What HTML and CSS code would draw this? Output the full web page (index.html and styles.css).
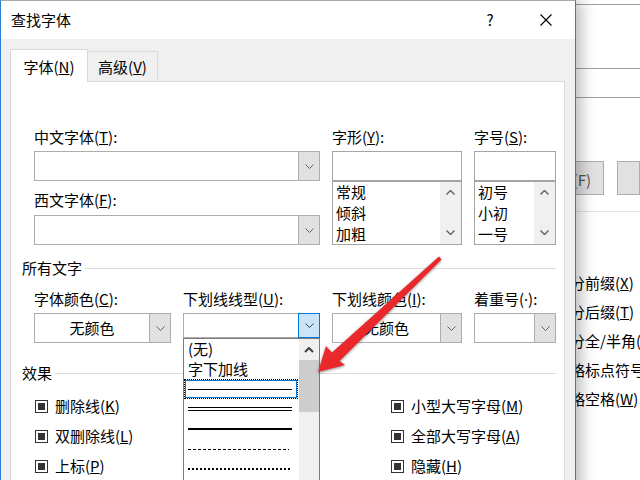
FILE: index.html
```html
<!DOCTYPE html>
<html lang="zh-CN">
<head>
    <meta charset="UTF-8">
    <meta name="viewport" content="width=device-width, initial-scale=1.0">
    <title>查找字体</title>
    <link rel="stylesheet" href="styles.css">
</head>
<body>
<div class="desk">

    <!-- word find dialog behind -->
    <div class="app">
        <div class="rule ru1"></div>
        <div class="rule ru2"></div>
        <div class="rule ru3"></div>
        <div class="appBtns">
            <div class="appBtn b1">查找下一处(F)</div>
            <div class="appBtn b2"></div>
        </div>
        <div class="rule ru4"></div>
        <div class="appOpts">
            <div>区分前缀(<u>X</u>)</div>
            <div>区分后缀(<u>T</u>)</div>
            <div>区分全/半角(<u>M</u>)</div>
            <div>忽略标点符号(<u>S</u>)</div>
            <div>忽略空格(<u>W</u>)</div>
        </div>
    </div>

    <div class="dialog">
        <div class="titlebar">
            <span class="title">查找字体</span>
            <span class="help">?</span>
            <span class="close">
                <svg width="12" height="12" viewBox="0 0 12 12"><path d="M.5.5 11.5 11.5M11.5.5.5 11.5" stroke="#000" stroke-width="1.1" fill="none"/></svg>
            </span>
        </div>

        <div class="body">
            <div class="tabs">
                <div class="tab on">字体(<u>N</u>)</div>
                <div class="tab off">高级(<u>V</u>)</div>
            </div>

            <div class="panel">
                <div class="fonts">
                    <div>
                        <div class="lbl first">中文字体(<u>T</u>):</div>
                        <div class="combo">
                            <span class="val"></span>
                            <span class="drop"><svg width="9" height="5" viewBox="0 0 9 5"><path d="M.5.5 4.5 4.5 8.5.5" fill="none" stroke="#606060"/></svg></span>
                        </div>
                        <div class="lbl second">西文字体(<u>F</u>):</div>
                        <div class="combo">
                            <span class="val"></span>
                            <span class="drop"><svg width="9" height="5" viewBox="0 0 9 5"><path d="M.5.5 4.5 4.5 8.5.5" fill="none" stroke="#606060"/></svg></span>
                        </div>
                    </div>
                    <div>
                        <div class="lbl first">字形(<u>Y</u>):</div>
                        <div class="tbox"></div>
                        <div class="lbox">
                            <div class="items">
                                <div>常规</div>
                                <div>倾斜</div>
                                <div>加粗</div>
                            </div>
                            <div class="sb">
                                <svg width="9" height="5" viewBox="0 0 9 5"><path d="M.5 4.5 4.5.5 8.5 4.5" fill="none" stroke="#606060" stroke-width="1.4"/></svg>
                                <svg width="9" height="5" viewBox="0 0 9 5"><path d="M.5.5 4.5 4.5 8.5.5" fill="none" stroke="#606060" stroke-width="1.4"/></svg>
                            </div>
                        </div>
                    </div>
                    <div>
                        <div class="lbl first">字号(<u>S</u>):</div>
                        <div class="tbox"></div>
                        <div class="lbox">
                            <div class="items">
                                <div>初号</div>
                                <div>小初</div>
                                <div>一号</div>
                            </div>
                            <div class="sb">
                                <svg width="9" height="5" viewBox="0 0 9 5"><path d="M.5 4.5 4.5.5 8.5 4.5" fill="none" stroke="#606060" stroke-width="1.4"/></svg>
                                <svg width="9" height="5" viewBox="0 0 9 5"><path d="M.5.5 4.5 4.5 8.5.5" fill="none" stroke="#606060" stroke-width="1.4"/></svg>
                            </div>
                        </div>
                    </div>
                </div>

                <div class="grp g1">所有文字</div>

                <div class="colors">
                    <div>
                        <div class="lbl row2">字体颜色(<u>C</u>):</div>
                        <div class="combo">
                            <span class="val">无颜色</span>
                            <span class="drop"><svg width="9" height="5" viewBox="0 0 9 5"><path d="M.5.5 4.5 4.5 8.5.5" fill="none" stroke="#606060"/></svg></span>
                        </div>
                    </div>
                    <div>
                        <div class="lbl row2">下划线线型(<u>U</u>):</div>
                        <div class="combo open">
                            <span class="val"></span>
                            <span class="drop"><svg width="9" height="5" viewBox="0 0 9 5"><path d="M.5.5 4.5 4.5 8.5.5" fill="none" stroke="#404040"/></svg></span>

                            <div class="dd">
                                <div class="opts">
                                    <div class="opt">(无)</div>
                                    <div class="opt">字下加线</div>
                                    <div class="opt sel"><div class="ln"></div></div>
                                    <div class="opt"><div class="ln dbl"></div></div>
                                    <div class="opt"><div class="ln thick"></div></div>
                                    <div class="opt"><div class="ln dash"></div></div>
                                    <div class="opt"><div class="ln dot"></div></div>
                                </div>
                                <div class="sb">
                                    <div class="up"><svg width="10" height="6" viewBox="0 0 10 6"><path d="M1 5 5 1 9 5" fill="none" stroke="#404040" stroke-width="2"/></svg></div>
                                    <div class="thumb"></div>
                                </div>
                            </div>
                        </div>
                    </div>
                    <div>
                        <div class="lbl row2">下划线颜色(<u>I</u>):</div>
                        <div class="combo">
                            <span class="val">无颜色</span>
                            <span class="drop"><svg width="9" height="5" viewBox="0 0 9 5"><path d="M.5.5 4.5 4.5 8.5.5" fill="none" stroke="#606060"/></svg></span>
                        </div>
                    </div>
                    <div>
                        <div class="lbl row2">着重号(<span class="lat">·</span>):</div>
                        <div class="combo">
                            <span class="val"></span>
                            <span class="drop"><svg width="9" height="5" viewBox="0 0 9 5"><path d="M.5.5 4.5 4.5 8.5.5" fill="none" stroke="#606060"/></svg></span>
                        </div>
                    </div>
                </div>

                <div class="grp g2">效果</div>

                <div class="fx">
                    <div class="chk"><span class="box"></span><span>删除线(<u>K</u>)</span></div>
                    <div class="chk"><span class="box"></span><span>小型大写字母(<u>M</u>)</span></div>
                    <div class="chk"><span class="box"></span><span>双删除线(<u>L</u>)</span></div>
                    <div class="chk"><span class="box"></span><span>全部大写字母(<u>A</u>)</span></div>
                    <div class="chk"><span class="box"></span><span>上标(<u>P</u>)</span></div>
                    <div class="chk"><span class="box"></span><span>隐藏(<u>H</u>)</span></div>
                </div>
            </div>
        </div>
    </div>

    <!-- red annotation arrow -->
    <svg class="arrow" width="640" height="480" viewBox="0 0 640 480">
        <defs>
            <linearGradient id="red" x1="0" y1="0" x2="1" y2="1">
                <stop offset="0" stop-color="#ff4545"/>
                <stop offset="1" stop-color="#d60a10"/>
            </linearGradient>
        </defs>
        <polygon points="318,372 326,346 332,352.5 439,256.5 441.5,259.5 339.5,361 345,365" fill="url(#red)"/>
    </svg>
</div>
</body>
</html>
```

FILE: styles.css
```css
*{
    margin: 0;
    padding: 0;
    box-sizing: border-box;
}
body{
    font-family: "Noto Sans CJK SC", "Noto Sans", sans-serif;
    font-size: 15px;
    color: #000;
    background: #fff;
    overflow: hidden;
}
.desk{
    position: relative;
    width: 640px;
    height: 480px;
    overflow: hidden;
    background: #fff;
}
.lat{
    font-family: "Noto Sans", sans-serif;
}

/* app behind the dialog */
.app{
    padding-left: 540px;
}
.rule{
    height: 1px;
    background: #a0a0a0;
}
.ru1{ margin-top: 4px; }
.ru2{ margin-top: 63px; }
.ru3{ margin-top: 28px; }
.ru4{
    margin-top: 16px;
    background: #e3e3e3;
}
.appBtns{
    display: flex;
    gap: 13px;
    margin-top: 63px;
    height: 34px;
}
.appBtn{
    border: 1px solid #adadad;
    background: #e1e1e1;
    display: flex;
    align-items: center;
    justify-content: flex-end;
    padding: 3px 12px 0 0;
    white-space: nowrap;
    color: #555;
}
.b1{ width: 64px; }
.b2{ width: 60px; }
.appOpts{
    margin-top: 56px;
    padding-left: 15px;
    line-height: 29px;
    white-space: nowrap;
}

/* dialog */
.dialog{
    position: absolute;
    left: 0;
    top: 0;
    width: 576px;
    height: 520px;
    background: #f0f0f0;
    border: 1px solid #2b7fd6;
    border-top-color: #a8a8a8;
    box-shadow: 5px 0 14px rgba(0, 0, 0, 0.28);
    z-index: 2;
}
.titlebar{
    height: 38px;
    background: #fff;
    display: flex;
    align-items: center;
    line-height: 20px;
}
.title{
    padding-left: 10px;
}
.help{
    margin-left: auto;
    width: 30px;
    text-align: center;
}
.close{
    width: 46px;
    margin: 0 6px 0 18px;
    display: flex;
    justify-content: center;
}
.body{
    padding: 10px 10px 0 9px;
}
.tabs{
    display: flex;
    align-items: flex-end;
    height: 32px;
}
.tab{
    line-height: 20px;
    text-align: center;
    border: 1px solid #d9d9d9;
    border-bottom: none;
    white-space: nowrap;
}
.tab.on{
    width: 78px;
    height: 33px;
    margin-bottom: -1px;
    padding-top: 7px;
    background: #fff;
    position: relative;
    z-index: 1;
}
.tab.off{
    width: 70px;
    height: 30px;
    padding-top: 5px;
    border-left: none;
    background: #f0f0f0;
}
.panel{
    height: 430px;
    background: #fff;
    border: 1px solid #d9d9d9;
    padding: 45px 8px 0 11px;
}

.lbl{
    height: 20px;
    line-height: 20px;
    white-space: nowrap;
}
.lbl.first{ margin-bottom: 4px; }
.lbl.second{
    margin-top: 9px;
    margin-bottom: 5px;
}
.lbl.row2{ margin-bottom: 4px; }

.fonts{
    display: grid;
    grid-template-columns: 286px 130px 82px;
    column-gap: 12px;
    margin-left: 12px;
}
.combo{
    height: 30px;
    border: 1px solid #adadad;
    background: #fff;
    display: flex;
}
.combo .val{
    flex: 1;
    display: flex;
    align-items: center;
    justify-content: center;
    line-height: 20px;
}
.combo .drop{
    width: 21px;
    background: #e1e1e1;
    border-left: 1px solid #adadad;
    display: flex;
    align-items: center;
    justify-content: center;
}
.tbox{
    height: 30px;
    border: 1px solid #a5a5a5;
    background: #fff;
}
.lbox{
    height: 64px;
    border: 1px solid #a5a5a5;
    display: flex;
    overflow: hidden;
}
.lbox .items{
    flex: 1;
    padding-left: 3px;
    margin-top: -1px;
    line-height: 21px;
}
.lbox .sb{
    width: 21px;
    background: #f0f0f0;
    display: flex;
    flex-direction: column;
    justify-content: space-between;
    align-items: center;
    padding: 8px 0 9px;
}

.grp{
    display: flex;
    align-items: center;
    gap: 3px;
    height: 20px;
    line-height: 20px;
}
.grp::after{
    content: "";
    flex: 1;
    height: 1px;
    background: #dcdcdc;
}
.g1{ margin-top: 13px; }
.g2{ margin-top: 20px; }

.colors{
    display: grid;
    grid-template-columns: 137px 137px 130px 82px;
    column-gap: 12px;
    margin: 11px 0 0 12px;
}
.combo.open{
    height: 25px;
    position: relative;
}
.combo.open .drop{
    width: 22px;
    margin: -1px -1px -1px 0;
    background: #cce4f7;
    border: 1px solid #0078d7;
}

/* open underline list */
.dd{
    position: absolute;
    left: -1px;
    top: 24px;
    width: 137px;
    height: 160px;
    border: 1px solid #7a7a7a;
    background: #fff;
    z-index: 3;
}
.dd .opts{
    width: 115px;
}
.opt{
    height: 20px;
    line-height: 20px;
    padding-left: 4px;
    display: flex;
    align-items: center;
    white-space: nowrap;
}
.opt.sel{
    width: 114px;
    padding-left: 3px;
    border: 1px dotted #000;
    box-shadow: inset 0 0 0 1px #0078d7;
}
.ln{
    width: 104px;
    height: 1px;
    background: #000;
}
.ln.dbl{
    height: 4px;
    background: none;
    border-top: 1px solid #000;
    border-bottom: 1px solid #000;
}
.ln.thick{ height: 2px; }
.ln.dash{
    width: 101px;
    background: repeating-linear-gradient(90deg, #000 0 3px, transparent 3px 5px);
}
.ln.dot{
    width: 102px;
    height: 2px;
    background: repeating-linear-gradient(90deg, #000 0 2px, transparent 2px 4px);
}
.dd .sb{
    position: absolute;
    top: 0;
    right: 0;
    bottom: 0;
    width: 20px;
    background: #f0f0f0;
}
.dd .up{
    height: 21px;
    display: flex;
    align-items: center;
    justify-content: center;
}
.dd .thumb{
    height: 52px;
    background: #cdcdcd;
}

/* effects */
.fx{
    display: grid;
    grid-template-columns: 356px auto;
    row-gap: 10px;
    margin: 13px 0 0 13px;
}
.chk{
    display: flex;
    align-items: center;
    gap: 7px;
    height: 20px;
    line-height: 20px;
    white-space: nowrap;
}
.box{
    width: 13px;
    height: 13px;
    border: 1px solid #333;
    display: flex;
    align-items: center;
    justify-content: center;
}
.box::after{
    content: "";
    width: 7px;
    height: 7px;
    background: #333;
}

.arrow{
    position: absolute;
    left: 0;
    top: 0;
    z-index: 5;
    pointer-events: none;
    filter: drop-shadow(0 1px 1.5px rgba(0, 0, 0, 0.45));
}
```
